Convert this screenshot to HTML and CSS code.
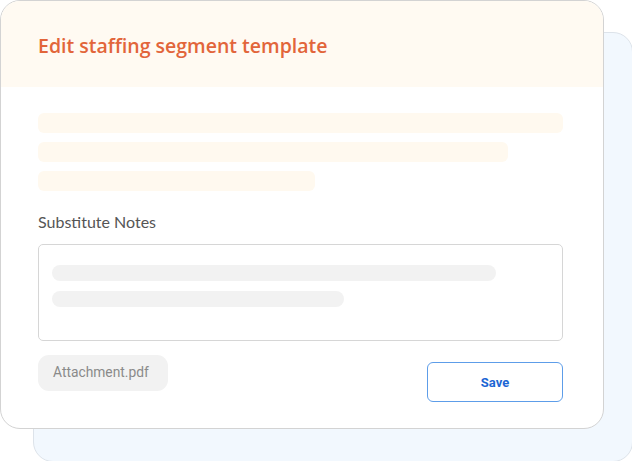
FILE: index.html
```html
<!DOCTYPE html>
<html>
<head>
<meta charset="utf-8">
<link rel="stylesheet" href="styles.css">
</head>
<body>
<div class="stage">
  <div class="back-card"></div>
  <div class="card">
    <div class="card-header">
      <h1 class="title">Edit staffing segment template</h1>
    </div>
    <div class="card-body">
      <div class="skeleton-group">
        <div class="sk sk-warm w1"></div>
        <div class="sk sk-warm w2"></div>
        <div class="sk sk-warm w3"></div>
      </div>
      <label class="field-label">Substitute Notes</label>
      <div class="textarea">
        <div class="sk sk-gray t1"></div>
        <div class="sk sk-gray t2"></div>
      </div>
      <div class="footer">
        <div class="chip">Attachment.pdf</div>
        <button class="save">Save</button>
      </div>
    </div>
  </div>
</div>
</body>
</html>
```
FILE: styles.css
```css
html, body {
  margin: 0;
  padding: 0;
  background: #ffffff;
}
.stage {
  position: relative;
  width: 632px;
  height: 461px;
  overflow: hidden;
}
.back-card {
  position: absolute;
  left: 33px;
  top: 32px;
  width: 600px;
  height: 430px;
  box-sizing: border-box;
  background: #f2f8fe;
  border: 1px solid #dde3ea;
  border-radius: 20px;
}
.card {
  position: relative;
  width: 604px;
  height: 429px;
  box-sizing: border-box;
  background: #ffffff;
  border: 1.5px solid #d3d3d3;
  border-radius: 20px;
  overflow: hidden;
  display: flex;
  flex-direction: column;
}
.card-header {
  height: 86px;
  background: #fffaf2;
  display: flex;
  align-items: center;
  padding-left: 37px;
  padding-top: 2px;
  box-sizing: border-box;
}
.title {
  margin: 0;
  font-family: "Open Sans", "Liberation Sans", sans-serif;
  font-weight: 600;
  font-size: 19.5px;
  color: #e2653a;
}
.card-body {
  padding: 26px 40px 0 37px;
  display: flex;
  flex-direction: column;
}
.skeleton-group {
  display: flex;
  flex-direction: column;
  gap: 9px;
}
.sk {
  border-radius: 6px;
}
.sk-warm {
  height: 20px;
  background: #fff9ef;
}
.w1 { width: 525px; }
.w2 { width: 470px; }
.w3 { width: 277px; }
.field-label {
  margin-top: 22px;
  font-family: Lato, "Liberation Sans", sans-serif;
  font-size: 16px;
  color: #555555;
  line-height: 18px;
}
.textarea {
  margin-top: 13px;
  width: 525px;
  height: 97px;
  box-sizing: border-box;
  border: 1.5px solid #d6d6d6;
  border-radius: 5px;
  padding: 19.5px 13px 0;
  display: flex;
  flex-direction: column;
  gap: 10px;
}
.sk-gray {
  height: 16px;
  background: #f2f2f2;
  border-radius: 8px;
}
.t1 { width: 444px; }
.t2 { width: 292px; }
.footer {
  margin-top: 14px;
  width: 525px;
  display: flex;
  justify-content: space-between;
  align-items: flex-start;
}
.chip {
  width: 130px;
  height: 36px;
  box-sizing: border-box;
  background: #f2f2f2;
  border-radius: 11px;
  font-family: Roboto, "Liberation Sans", sans-serif;
  font-size: 13.8px;
  color: #8a8a8a;
  display: flex;
  align-items: center;
  justify-content: flex-start;
  padding: 0 0 2px 15px;
}
.save {
  margin-top: 7px;
  width: 136px;
  height: 40px;
  box-sizing: border-box;
  background: #ffffff;
  border: 1.5px solid #5d9de9;
  border-radius: 6px;
  font-family: Roboto, "Liberation Sans", sans-serif;
  font-weight: 700;
  font-size: 13px;
  color: #1c66d4;
  padding: 0;
}
```
